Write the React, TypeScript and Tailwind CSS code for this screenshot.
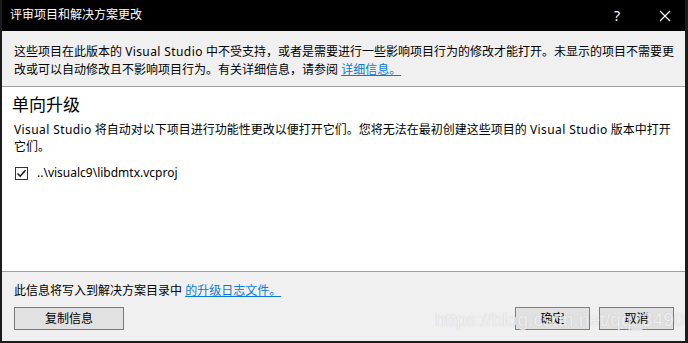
import React from "react";

const font = { fontFamily: '"Noto Sans", "Noto Sans CJK SC", sans-serif' };

export default function App() {
  return (
    <div
      className="relative w-[688px] h-[343px] flex flex-col bg-white border-l-2 border-r-[3px] border-b-2 border-[#1c1c1c] overflow-hidden text-[12px] text-black"
      style={font}
    >
      {/* Title bar */}
      <div className="h-[31px] shrink-0 bg-black flex items-center pl-[8px] text-white">
        <span className="leading-[18px] mt-[-1px]">评审项目和解决方案更改</span>
        <div className="ml-auto flex items-center">
          <span className="w-[46px] text-center text-[14px] leading-[18px] mr-[2px]">?</span>
          <svg width="46" height="30" viewBox="0 0 46 30" className="mr-[-3px]">
            <path d="M18 10 L28 20 M28 10 L18 20" stroke="white" strokeWidth="1.1" />
          </svg>
        </div>
      </div>

      {/* Info area */}
      <div className="h-[56px] shrink-0 bg-[#f0f0f0] border-b border-[#a0a0a0] pl-[12px] pr-[10px] pt-[12px] leading-[18px]">
        这些项目在此版本的 <span className="tracking-[0.4px]">Visual Studio</span> 中不受支持，或者是需要进行一些影响项目行为的修改才能打开。未显示的项目不需要更改或可以自动修改且不影响项目行为。有关详细信息，请参阅{" "}
        <span className="text-[#0a7ad8] underline">详细信息。</span>
      </div>

      {/* Content */}
      <div className="flex-1 bg-white pl-[10px] pr-[10px] pt-[6px]">
        <div className="text-[17px] leading-[24px]">单向升级</div>
        <div className="leading-[17px] mt-[4px] pl-[2px]">
          <span className="tracking-[0.4px]">Visual Studio</span> 将自动对以下项目进行功能性更改以便打开它们。您将无法在最初创建这些项目的{" "}
          <span className="tracking-[0.4px]">Visual Studio</span> 版本中打开
          <br />
          它们。
        </div>
        <div className="flex items-center mt-[9px] pl-[3px] h-[18px]">
          <div className="w-[13px] h-[13px] border border-[#333] bg-white flex items-center justify-center">
            <svg width="11" height="11" viewBox="0 0 11 11">
              <path d="M1.5 5.5 L4.2 8.2 L9.5 2.2" stroke="#1a1a1a" strokeWidth="1.6" fill="none" />
            </svg>
          </div>
          <span className="ml-[9px] leading-[18px]">..\visualc9\libdmtx.vcproj</span>
        </div>
      </div>

      {/* Bottom */}
      <div className="h-[70px] shrink-0 bg-[#f0f0f0] border-t border-[#a0a0a0] pl-[12px] pr-[11px] pt-[10px]">
        <div className="leading-[18px]">
          此信息将写入到解决方案目录中 <span className="text-[#0a7ad8] underline">的升级日志文件。</span>
        </div>
        <div className="flex items-center mt-[7px]">
          <div className="w-[110px] h-[23px] bg-[#e1e1e1] border border-[#7a7a7a] flex items-center justify-center leading-[18px]">
            复制信息
          </div>
          <div className="ml-auto w-[75px] h-[23px] bg-[#e1e1e1] border border-[#3c8de8] flex items-center justify-center leading-[18px]">
            确定
          </div>
          <div className="ml-[9px] w-[75px] h-[23px] bg-[#e1e1e1] border border-[#7a7a7a] flex items-center justify-center leading-[18px]">
            取消
          </div>
        </div>
      </div>

      {/* Watermark */}
      <div
        className="absolute left-[433px] top-[308px] text-[19px] leading-[24px] text-white/75 pointer-events-none"
        style={{ fontFamily: '"Liberation Sans", Arial, sans-serif', textShadow: "0 0 1px rgba(140,140,140,0.5)" }}
      >
        https://blog.csdn.net/qq_34905116
      </div>
    </div>
  );
}
